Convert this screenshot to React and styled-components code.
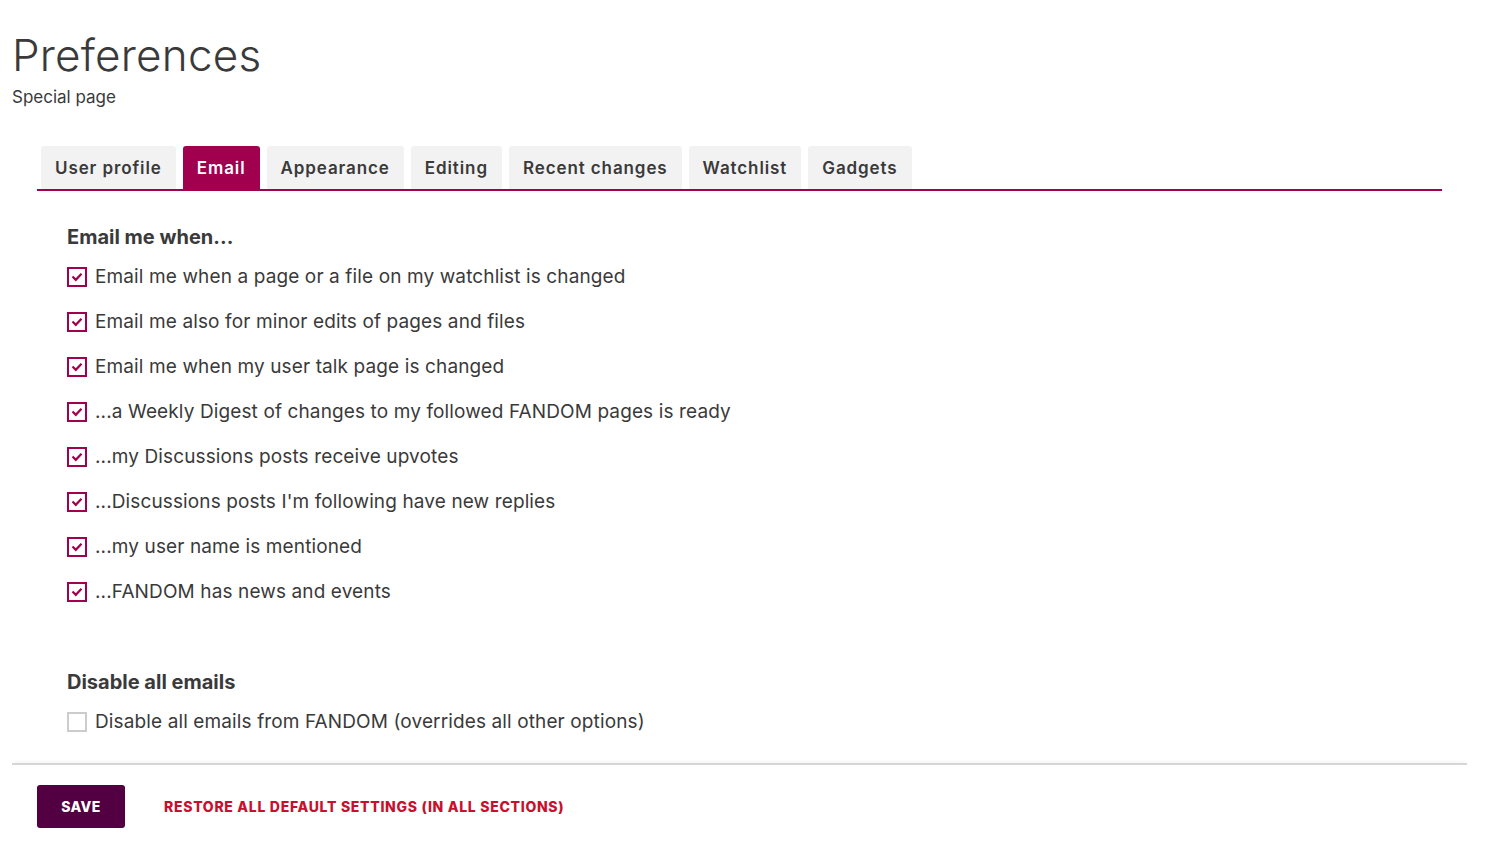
import React, { Component } from "react";
import styled, { createGlobalStyle } from "styled-components";

const GlobalStyle = createGlobalStyle`
  body {
    margin: 0;
    background: #fff;
    font-family: "Inter", "Noto Sans", sans-serif;
    color: #3a3a3a;
  }
`;

const Page = styled.div`
  padding: 27px 12px 0 12px;
  width: 1455px;
`;

const Title = styled.h1`
  margin: 0;
  font-size: 44px;
  font-weight: 300;
  color: #3a3a3a;
  line-height: 56px;
  letter-spacing: 0.2px;
`;

const Subtitle = styled.div`
  font-size: 17px;
  color: #3a3a3a;
  margin-top: 4px;
`;

const TabBar = styled.div`
  display: flex;
  gap: 7px;
  margin: 39px 25px 0 25px;
  padding-left: 4px;
  border-bottom: 2px solid #a0004e;
`;

const Tab = styled.div`
  height: 43px;
  padding: 0 14px;
  display: flex;
  align-items: center;
  font-size: 17px;
  font-weight: 600;
  letter-spacing: 0.9px;
  border-radius: 3px 3px 0 0;
  background: ${p => (p.active ? "#a0004e" : "#f2f2f2")};
  color: ${p => (p.active ? "#fff" : "#3a3a3a")};
`;

const Content = styled.div`
  padding: 34px 0 0 55px;
`;

const SectionTitle = styled.h3`
  margin: 0 0 5px 0;
  font-size: 20px;
  font-weight: 700;
  line-height: 24px;
  color: #3a3a3a;
`;

const Row = styled.label`
  display: flex;
  align-items: center;
  height: 45px;
  font-size: 19px;
  letter-spacing: 0.12px;
  color: #3a3a3a;
`;

const Box = styled.span`
  box-sizing: border-box;
  width: 20px;
  height: 20px;
  margin-right: 8px;
  border: 2px solid ${p => (p.checked ? "#a0004e" : "#ccc")};
  display: flex;
  align-items: center;
  justify-content: center;
`;

const Section = styled.div`
  margin-bottom: ${p => p.spacing || 0}px;
`;

const Footer = styled.div`
  margin-top: 19px;
  border-top: 2px solid #d6d6d6;
  box-shadow: 0 -3px 4px -2px rgba(0, 0, 0, 0.06);
  padding: 20px 0 0 25px;
  display: flex;
  align-items: center;
  gap: 39px;
`;

const SaveButton = styled.button`
  width: 88px;
  height: 43px;
  border: none;
  border-radius: 3px;
  background: #520042;
  color: #fff;
  font-family: "Inter", sans-serif;
  font-weight: 800;
  font-size: 14px;
  letter-spacing: 0.4px;
`;

const RestoreLink = styled.a`
  color: #c8102e;
  font-weight: 800;
  font-size: 14px;
  letter-spacing: 0.7px;
  text-decoration: none;
`;

const Check = () => (
  <svg width="12" height="10" viewBox="0 0 12 10">
    <path d="M1.5 4.5 L4.8 7.8 L10.5 1.8" fill="none" stroke="#a0004e" strokeWidth="2.2" />
  </svg>
);

const tabs = ["User profile", "Email", "Appearance", "Editing", "Recent changes", "Watchlist", "Gadgets"];

const options = [
  "Email me when a page or a file on my watchlist is changed",
  "Email me also for minor edits of pages and files",
  "Email me when my user talk page is changed",
  "...a Weekly Digest of changes to my followed FANDOM pages is ready",
  "...my Discussions posts receive upvotes",
  "...Discussions posts I'm following have new replies",
  "...my user name is mentioned",
  "...FANDOM has news and events"
];

export default class App extends Component {
  render() {
    return (
      <Page>
        <GlobalStyle />
        <Title>Preferences</Title>
        <Subtitle>Special page</Subtitle>
        <TabBar>
          {tabs.map(t => (
            <Tab key={t} active={t === "Email"}>{t}</Tab>
          ))}
        </TabBar>
        <Content>
          <Section spacing={56}>
            <SectionTitle>Email me when...</SectionTitle>
            {options.map(o => (
              <Row key={o}>
                <Box checked><Check /></Box>
                {o}
              </Row>
            ))}
          </Section>
          <Section>
            <SectionTitle>Disable all emails</SectionTitle>
            <Row>
              <Box />
              Disable all emails from FANDOM (overrides all other options)
            </Row>
          </Section>
        </Content>
        <Footer>
          <SaveButton>SAVE</SaveButton>
          <RestoreLink href="#">RESTORE ALL DEFAULT SETTINGS (IN ALL SECTIONS)</RestoreLink>
        </Footer>
      </Page>
    );
  }
}
